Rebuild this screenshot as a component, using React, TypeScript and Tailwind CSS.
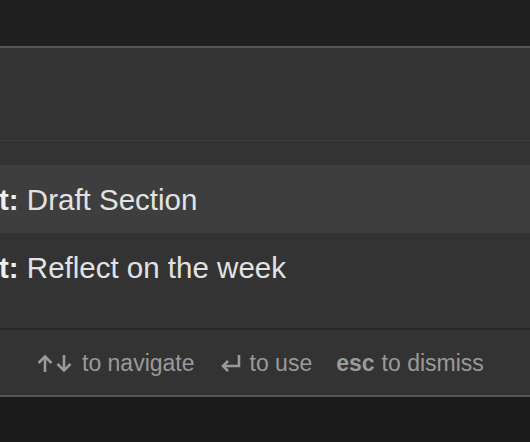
import React from "react";

function UpArrow() {
  return (
    <svg width="16" height="19" viewBox="0 0 16 19" fill="none" stroke="currentColor" strokeWidth="2.6" strokeLinecap="butt" strokeLinejoin="miter">
      <path d="M8 18V2.5" />
      <path d="M1.5 9L8 2.5L14.5 9" />
    </svg>
  );
}

function DownArrow() {
  return (
    <svg width="16" height="19" viewBox="0 0 16 19" fill="none" stroke="currentColor" strokeWidth="2.6" strokeLinecap="butt" strokeLinejoin="miter">
      <path d="M8 1V16.5" />
      <path d="M1.5 10L8 16.5L14.5 10" />
    </svg>
  );
}

function ReturnArrow() {
  return (
    <svg width="21" height="17" viewBox="0 0 21 17" fill="none" stroke="currentColor" strokeWidth="2.6" strokeLinecap="butt" strokeLinejoin="miter">
      <path d="M19 0V11H3" />
      <path d="M8 6L3 11L8 16" />
    </svg>
  );
}

export default function App() {
  return (
    <div
      className="w-[530px] h-[442px] overflow-hidden bg-[#1c1c1c] flex flex-col"
      style={{ fontFamily: '"Liberation Sans", Arial, Helvetica, sans-serif' }}
    >
      <div className="h-[46px] bg-[#1f1f1f] shrink-0" />
      <div className="flex flex-col bg-[#333333] border-y-2 border-[#555555] shrink-0">
        <div className="h-[93px] border-b border-[#3c3c3c]" />
        <div className="pt-[24px] pb-[27px] flex flex-col">
          <div className="h-[68px] pt-[3px] bg-[#3e3e3e] flex items-center text-[29.5px] text-[#e2e2e2] whitespace-nowrap">
            <span className="font-bold -ml-[1px] text-[#eeeeee]">t:</span>
            <span>&nbsp;Draft Section</span>
          </div>
          <div className="h-[68px] pt-[3px] flex items-center text-[29.5px] text-[#e2e2e2] whitespace-nowrap">
            <span className="font-bold -ml-[1px] text-[#eeeeee]">t:</span>
            <span>&nbsp;Reflect on the week</span>
          </div>
        </div>
        <div className="h-[2px] bg-[#262626]" />
        <div className="h-[65px] pt-[1px] flex items-center pl-[37px] text-[23px] text-[#9a9a9a] whitespace-nowrap">
          <span className="flex items-center gap-[3px]">
            <UpArrow />
            <DownArrow />
          </span>
          <span className="ml-[10px]">to navigate</span>
          <span className="ml-[25px] flex items-center">
            <ReturnArrow />
          </span>
          <span className="ml-[9px]">to use</span>
          <span className="ml-[24px] font-bold">esc</span>
          <span className="ml-[7px]">to dismiss</span>
        </div>
      </div>
      <div className="flex-1 bg-[#1b1b1b]" />
    </div>
  );
}
